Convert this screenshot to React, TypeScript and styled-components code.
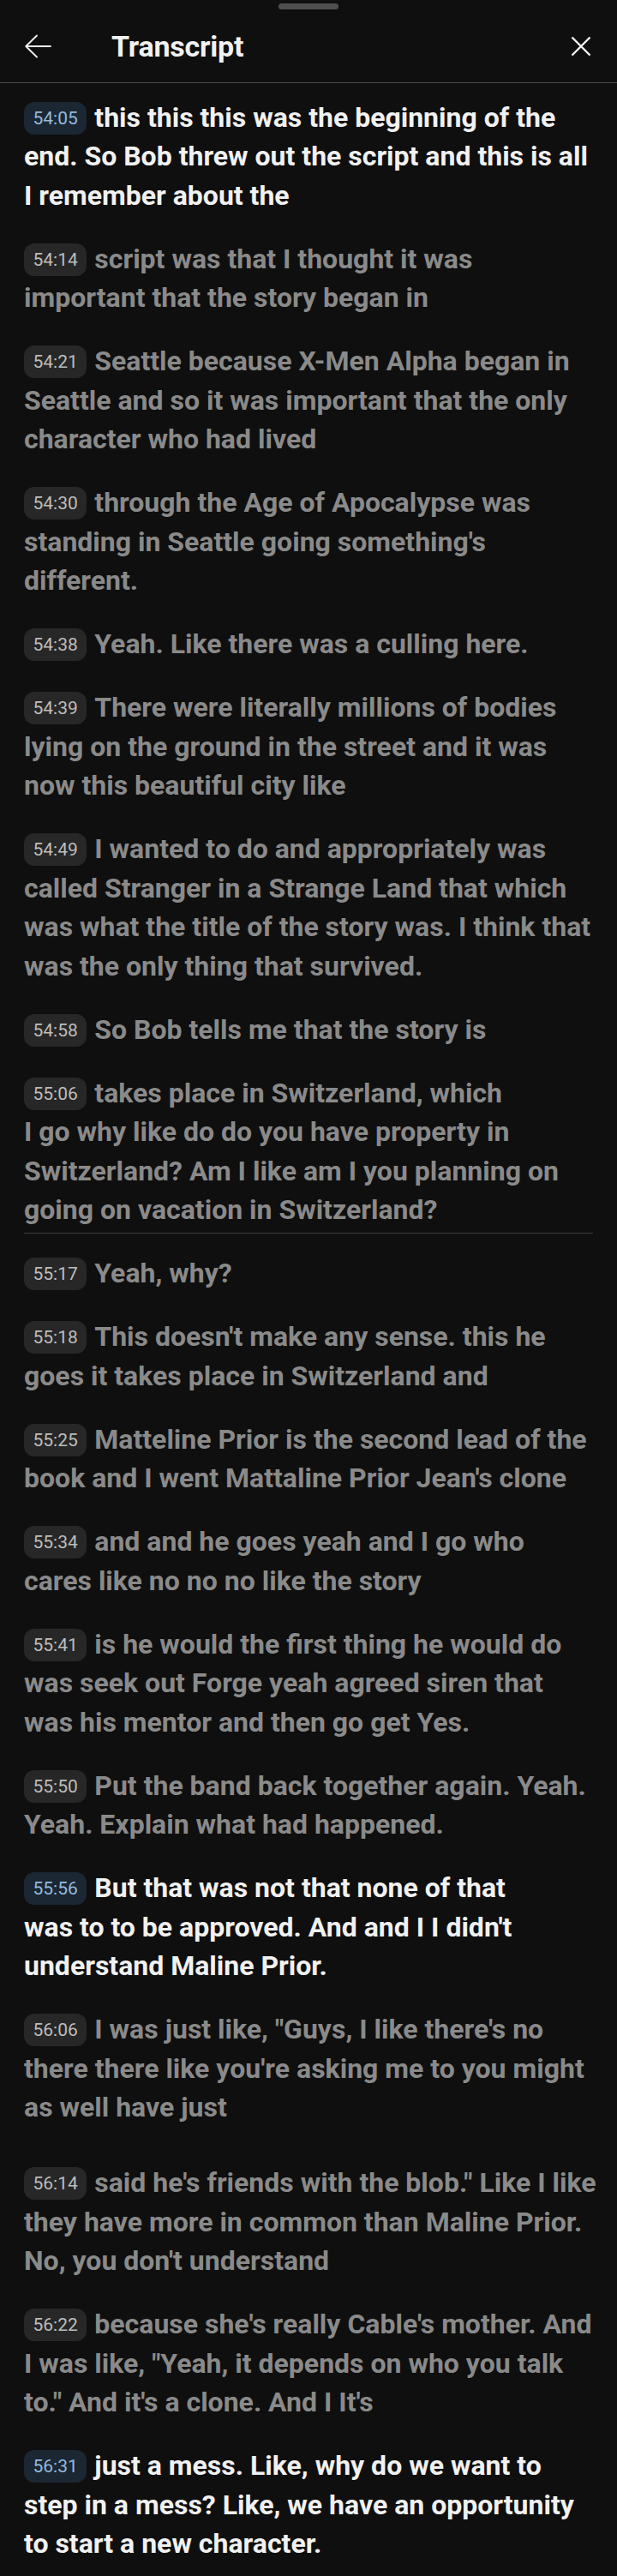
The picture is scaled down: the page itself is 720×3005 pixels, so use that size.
import React from 'react';
import styled, { createGlobalStyle } from 'styled-components';

const GlobalStyle = createGlobalStyle`
  body {
    margin: 0;
    background: #0f0f0f;
    font-family: Roboto, "Noto Sans", "Liberation Sans", sans-serif;
    -webkit-font-smoothing: antialiased;
  }
`;

const Sheet = styled.div`
  width: 720px;
  min-height: 100vh;
  background: #0f0f0f;
  color: #f1f1f1;
`;

const Handle = styled.div`
  width: 70px;
  height: 7px;
  margin: 4px auto 0;
  border-radius: 4px;
  background: #4f4f4f;
`;

const Header = styled.div`
  display: flex;
  align-items: center;
  height: 85px;
  padding: 0 30px 0 28px;
  border-bottom: 1px solid #4a4a4a;
`;

const IconButton = styled.button`
  display: flex;
  align-items: center;
  justify-content: center;
  padding: 0;
  border: none;
  background: none;
  color: #f1f1f1;
  cursor: pointer;
`;

const Title = styled.h1`
  flex: 1;
  margin: 0 0 0 70px;
  font-size: 34px;
  font-weight: 700;
  line-height: 1;
  letter-spacing: -0.2px;
`;

const List = styled.div`
  padding: 0 28px 16px;
`;

const Entry = styled.div<{ $space: number; $rule?: boolean }>`
  padding-top: ${(p) => p.$space}px;
  padding-bottom: ${(p) => (p.$rule ? 3 : 0)}px;
  border-bottom: ${(p) => (p.$rule ? '1px solid #3a3a3a' : 'none')};
`;

const Text = styled.p<{ $active?: boolean }>`
  margin: 0;
  font-size: 32px;
  font-weight: 700;
  line-height: 45.5px;
  white-space: nowrap;
  color: ${(p) => (p.$active ? '#f1f1f1' : '#8a8a8a')};
`;

const Stamp = styled.span<{ $active?: boolean }>`
  display: inline-block;
  vertical-align: top;
  height: 38px;
  margin: 4px 9px 0 0;
  padding: 0 10.5px;
  border-radius: 12px;
  font-size: 21px;
  font-weight: 400;
  line-height: 38px;
  background: ${(p) => (p.$active ? '#1b2733' : '#272727')};
  color: ${(p) => (p.$active ? '#93badf' : '#bdbdbd')};
`;

interface ILine {
  time: string;
  lines: string[];
  active?: boolean;
  rule?: boolean;
  space?: number;
}

const transcript: ILine[] = [
  {
    time: '54:05',
    active: true,
    space: 17.5,
    lines: [
      'this this this was the beginning of the',
      'end. So Bob threw out the script and this is all',
      'I remember about the',
    ],
  },
  {
    time: '54:14',
    lines: ['script was that I thought it was', 'important that the story began in'],
  },
  {
    time: '54:21',
    lines: [
      'Seattle because X-Men Alpha began in',
      'Seattle and so it was important that the only',
      'character who had lived',
    ],
  },
  {
    time: '54:30',
    lines: [
      'through the Age of Apocalypse was',
      "standing in Seattle going something's",
      'different.',
    ],
  },
  { time: '54:38', lines: ['Yeah. Like there was a culling here.'] },
  {
    time: '54:39',
    lines: [
      'There were literally millions of bodies',
      'lying on the ground in the street and it was',
      'now this beautiful city like',
    ],
  },
  {
    time: '54:49',
    lines: [
      'I wanted to do and appropriately was',
      'called Stranger in a Strange Land that which',
      'was what the title of the story was. I think that',
      'was the only thing that survived.',
    ],
  },
  { time: '54:58', lines: ['So Bob tells me that the story is'] },
  {
    time: '55:06',
    rule: true,
    lines: [
      'takes place in Switzerland, which',
      'I go why like do do you have property in',
      'Switzerland? Am I like am I you planning on',
      'going on vacation in Switzerland?',
    ],
  },
  { time: '55:17', space: 24.5, lines: ['Yeah, why?'] },
  {
    time: '55:18',
    lines: ["This doesn't make any sense. this he", 'goes it takes place in Switzerland and'],
  },
  {
    time: '55:25',
    lines: [
      'Matteline Prior is the second lead of the',
      "book and I went Mattaline Prior Jean's clone",
    ],
  },
  {
    time: '55:34',
    lines: ['and and he goes yeah and I go who', 'cares like no no no like the story'],
  },
  {
    time: '55:41',
    lines: [
      'is he would the first thing he would do',
      'was seek out Forge yeah agreed siren that',
      'was his mentor and then go get Yes.',
    ],
  },
  {
    time: '55:50',
    lines: ['Put the band back together again. Yeah.', 'Yeah. Explain what had happened.'],
  },
  {
    time: '55:56',
    active: true,
    lines: [
      'But that was not that none of that',
      "was to to be approved. And and I I didn't",
      'understand Maline Prior.',
    ],
  },
  {
    time: '56:06',
    lines: [
      'I was just like, "Guys, I like there\'s no',
      "there there like you're asking me to you might",
      'as well have just',
    ],
  },
  {
    time: '56:14',
    space: 42.5,
    lines: [
      'said he\'s friends with the blob." Like I like',
      'they have more in common than Maline Prior.',
      "No, you don't understand",
    ],
  },
  {
    time: '56:22',
    lines: [
      "because she's really Cable's mother. And",
      'I was like, "Yeah, it depends on who you talk',
      'to." And it\'s a clone. And I It\'s',
    ],
  },
  {
    time: '56:31',
    active: true,
    lines: [
      'just a mess. Like, why do we want to',
      'step in a mess? Like, we have an opportunity',
      'to start a new character.',
    ],
  },
];

const BackIcon = () => (
  <svg width="32" height="28" viewBox="0 0 32 28" fill="none">
    <path
      d="M31 14H2.5M15 1.5L2.2 14L15 26.5"
      stroke="currentColor"
      strokeWidth="1.8"
      strokeLinecap="round"
      strokeLinejoin="round"
    />
  </svg>
);

const CloseIcon = () => (
  <svg width="24" height="24" viewBox="0 0 24 24" fill="none">
    <path d="M1.5 1.5L22.5 22.5M22.5 1.5L1.5 22.5" stroke="currentColor" strokeWidth="2.4" />
  </svg>
);

const App = () => {
  return (
    <Sheet>
      <GlobalStyle />
      <Handle />
      <Header>
        <IconButton aria-label="Back">
          <BackIcon />
        </IconButton>
        <Title>Transcript</Title>
        <IconButton aria-label="Close">
          <CloseIcon />
        </IconButton>
      </Header>
      <List>
        {transcript.map((item) => (
          <Entry key={item.time} $space={item.space ?? 28.5} $rule={item.rule}>
            <Text $active={item.active}>
              <Stamp $active={item.active}>{item.time}</Stamp>
              {item.lines.map((line, i) => (
                <React.Fragment key={i}>
                  {i > 0 && <br />}
                  {line}
                </React.Fragment>
              ))}
            </Text>
          </Entry>
        ))}
      </List>
    </Sheet>
  );
};

export default App;
